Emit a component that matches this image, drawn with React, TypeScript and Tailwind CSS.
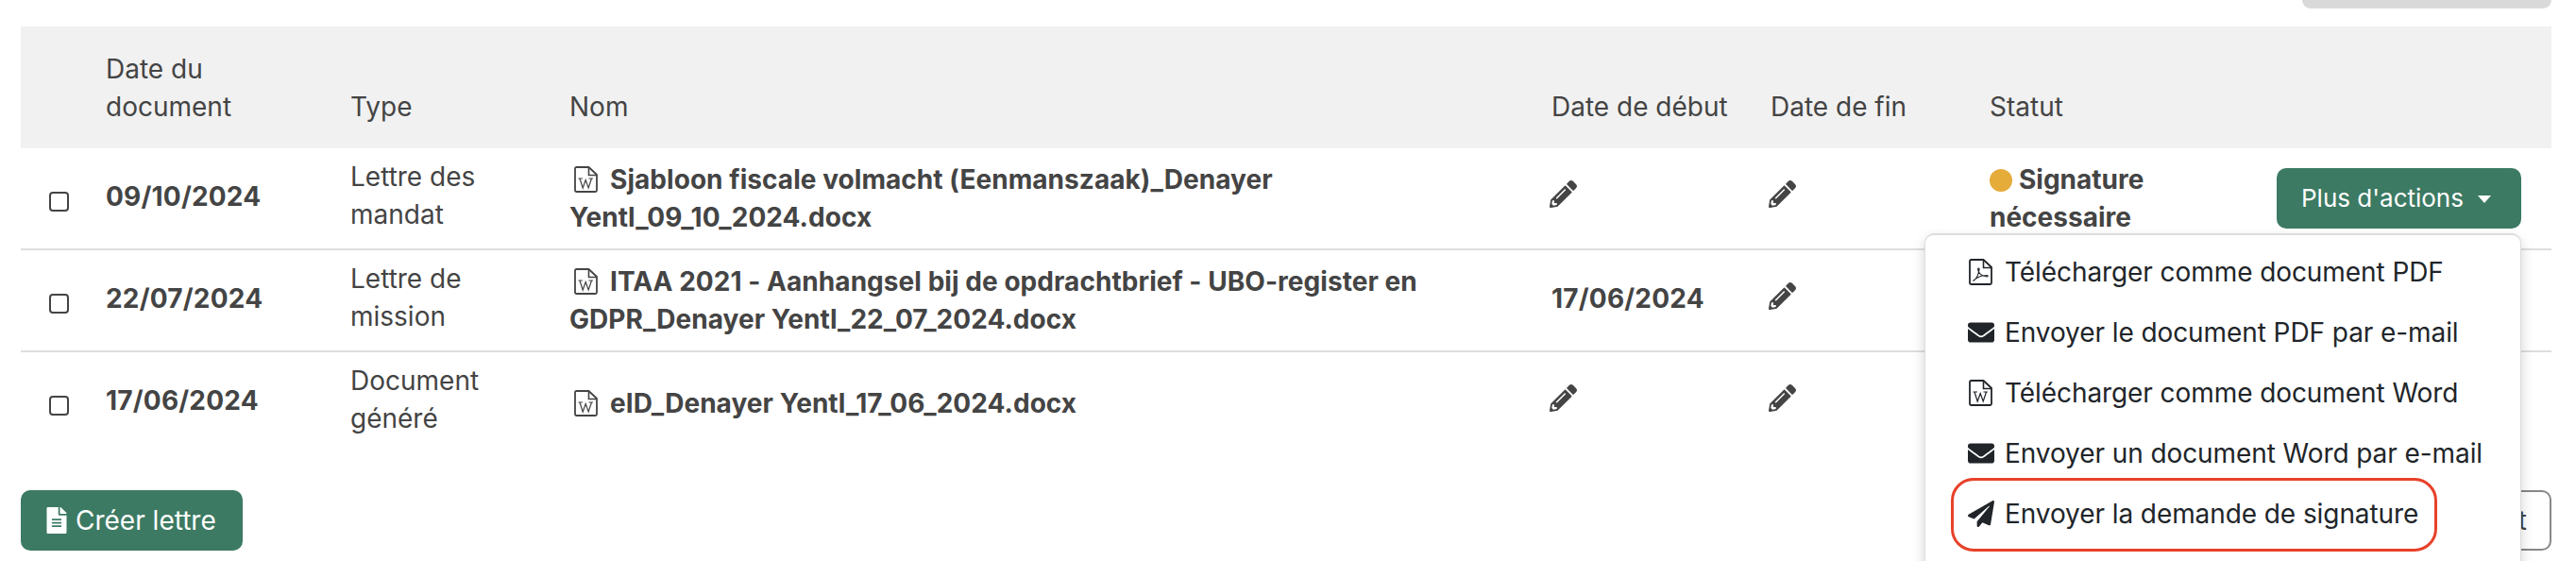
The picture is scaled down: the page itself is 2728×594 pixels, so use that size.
import React from "react";
import { FaPencilAlt, FaEnvelope, FaPaperPlane, FaFileAlt } from "react-icons/fa";

function WordIcon({ className = "" }: { className?: string }) {
  return (
    <svg viewBox="0 0 25 28" className={className} fill="none" stroke="currentColor">
      <path strokeWidth="1.8" strokeLinejoin="round" d="M2.5 1h13l8.5 8v16.5a1.5 1.5 0 0 1-1.500 1.500H2.500A1.500 1.500 0 0 1 1 25.500V2.500A1.500 1.500 0 0 1 2.500 1z" />
      <path strokeWidth="1.6" d="M15.500 1v8.500H24" />
      <path strokeWidth="1.200" d="M4.500 13h4.500M15.500 13h4.500M6 13l3.200 10 3-8.500 3 8.500 3.300-10" />
    </svg>
  );
}

function PdfIcon({ className = "" }: { className?: string }) {
  return (
    <svg viewBox="0 0 25 28" className={className} fill="none" stroke="currentColor">
      <path strokeWidth="1.8" strokeLinejoin="round" d="M2.500 1h13l8.500 8v16.500a1.500 1.500 0 0 1-1.500 1.500H2.500A1.500 1.500 0 0 1 1 25.500V2.500A1.500 1.500 0 0 1 2.500 1z" />
      <path strokeWidth="1.600" d="M15.500 1v8.500H24" />
      <path strokeWidth="1.200" d="M4.500 23.500c3-1.500 5.500-6 6.500-12 .3-2-1.500-2-1.300 0 .5 3.500 3 6.500 9.300 7.500 1.500 0 1.500-1.500 0-1.500-5 0-10.500 2-14.500 6z" />
    </svg>
  );
}

function ActionButton() {
  return (
    <button className="flex h-[64px] w-[259px] items-center gap-[15px] rounded-[10px] bg-[#3c7a63] pl-[26px] text-[26px] text-white">
      Plus d'actions
      <span className="mt-[1px] h-0 w-0 border-x-[7.5px] border-t-[8px] border-x-transparent border-t-white" />
    </button>
  );
}

const menuItems = [
  { icon: <PdfIcon className="ml-[1px] h-[28px] w-[25px]" />, label: "Télécharger comme document PDF" },
  { icon: <FaEnvelope size={28} />, label: "Envoyer le document PDF par e-mail" },
  { icon: <WordIcon className="ml-[1px] h-[28px] w-[25px]" />, label: "Télécharger comme document Word" },
  { icon: <FaEnvelope size={28} />, label: "Envoyer un document Word par e-mail" },
  { icon: <FaPaperPlane size={28} />, label: "Envoyer la demande de signature" },
];

function Menu() {
  return (
    <div className="absolute right-0 top-[69px] z-10 w-[632px] rounded-[10px] border border-t-2 border-[#dcdcdc] bg-white py-[7px] pb-[40px] text-[#212529] shadow-[0_6px_14px_rgba(0,0,0,0.18)]">
      {menuItems.map((m, i) => (
        <div key={m.label} className="relative flex h-[64px] items-center pl-[45px] font-normal">
          <span className="flex w-[39px] shrink-0 items-center">{m.icon}</span>
          <span className="whitespace-nowrap tracking-[-0.08px]">{m.label}</span>
          {i === 4 && (
            <span className="absolute left-[27px] top-[-6px] h-[78px] w-[515px] rounded-[24px] border-[3px] border-[#e8412a]" />
          )}
        </div>
      ))}
    </div>
  );
}

const Cb = () => (
  <input type="checkbox" className="mt-[6px] ml-[30px] block h-[21px] w-[21px] appearance-none rounded-[4px] border-2 border-[#444]" />
);

const Pen = () => <FaPencilAlt size={29} className="mb-[10px] ml-[-2px] text-[#444]" />;

const wordClass = "ml-[5px] mr-[13px] inline-block h-[28px] w-[25px] align-[-4px]";

export default function App() {
  return (
    <div className="h-[594px] w-[2728px] overflow-hidden bg-white text-[28px] leading-[40px] text-[#444] font-['Inter',sans-serif]">
      <div className="flex justify-end pr-[26px]">
        <div className="h-[9px] w-[264px] rounded-b-[12px] bg-[#d9d9d9]" />
      </div>
      <div className="mx-[22px] mt-[19px] w-[2680px]">
        <table className="w-[2680px] table-fixed text-left">
          <colgroup>
            <col className="w-[74px]" />
            <col className="w-[259px]" />
            <col className="w-[232px]" />
            <col className="w-[1040px]" />
            <col className="w-[232px]" />
            <col className="w-[232px]" />
            <col className="w-[304px]" />
            <col className="w-[307px]" />
          </colgroup>
          <thead>
            <tr className="bg-[#f1f1f1] align-bottom">
              <th className="h-[129px]" />
              <th className="px-4 pb-[24px] font-normal">Date du document</th>
              <th className="px-4 pb-[24px] font-normal">Type</th>
              <th className="px-4 pb-[24px] font-normal">Nom</th>
              <th className="whitespace-nowrap px-4 pb-[24px] font-normal">Date de début</th>
              <th className="px-4 pb-[24px] font-normal">Date de fin</th>
              <th className="px-4 pb-[24px] font-normal">Statut</th>
              <th />
            </tr>
          </thead>
          <tbody className="font-bold">
            <tr className="h-[107px] border-b-2 border-[#dedede]">
              <td><Cb /></td>
              <td className="px-4 pb-[5px] tracking-[0.2px]">09/10/2024</td>
              <td className="px-4 pb-[7px] font-normal">Lettre des mandat</td>
              <td className="px-4 tracking-[0.05px]">
                <WordIcon className={wordClass} />
                Sjabloon fiscale volmacht (Eenmanszaak)_Denayer Yentl_09_10_2024.docx
              </td>
              <td className="px-4"><Pen /></td>
              <td className="px-4"><Pen /></td>
              <td className="px-4">
                <span className="mr-[7px] inline-block h-[24px] w-[24px] rounded-full bg-[#e5ac3a] align-[-3px]" />
                Signature nécessaire
              </td>
              <td className="pl-[16px] font-normal">
                <div className="relative w-[259px]">
                  <ActionButton />
                  <Menu />
                </div>
              </td>
            </tr>
            <tr className="h-[108px] border-b-2 border-[#dedede]">
              <td><Cb /></td>
              <td className="px-4 pb-[5px] tracking-[0.2px]">22/07/2024</td>
              <td className="px-4 pb-[7px] font-normal">Lettre de mission</td>
              <td className="px-4 tracking-[0.05px]">
                <WordIcon className={wordClass} />
                ITAA 2021 - Aanhangsel bij de opdrachtbrief - UBO-register en GDPR_Denayer Yentl_22_07_2024.docx
              </td>
              <td className="px-4 pb-[5px] tracking-[0.2px]">17/06/2024</td>
              <td className="px-4"><Pen /></td>
              <td className="px-4" />
              <td className="pl-[16px] font-normal"><ActionButton /></td>
            </tr>
            <tr className="h-[108px]">
              <td><Cb /></td>
              <td className="px-4 pb-[5px] tracking-[0.2px]">17/06/2024</td>
              <td className="px-4 pb-[7px] font-normal">Document généré</td>
              <td className="px-4 tracking-[0.05px]">
                <WordIcon className={wordClass} />
                eID_Denayer Yentl_17_06_2024.docx
              </td>
              <td className="px-4"><Pen /></td>
              <td className="px-4"><Pen /></td>
              <td className="px-4" />
              <td className="pl-[16px] font-normal"><ActionButton /></td>
            </tr>
          </tbody>
        </table>
        <div className="mt-[39px] flex items-center justify-between">
          <button className="flex h-[64px] w-[235px] items-center gap-[8px] rounded-[10px] bg-[#3c7a63] pl-[26px] text-white">
            <FaFileAlt size={28} className="w-[24px]" />
            Créer lettre
          </button>
          <button className="h-[64px] rounded-[10px] border-2 border-[#888] px-[24px] text-[#444]">Document</button>
        </div>
      </div>
    </div>
  );
}
